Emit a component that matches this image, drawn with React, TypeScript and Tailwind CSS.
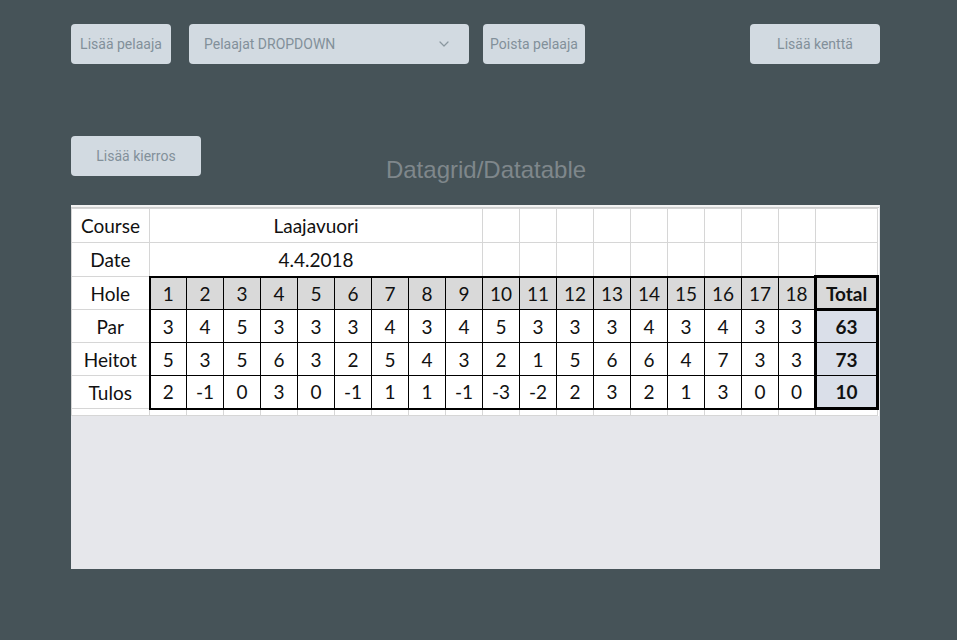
import React from "react";

const par = [3, 4, 5, 3, 3, 3, 4, 3, 4, 5, 3, 3, 3, 4, 3, 4, 3, 3];
const heitot = [5, 3, 5, 6, 3, 2, 5, 4, 3, 2, 1, 5, 6, 6, 4, 7, 3, 3];
const tulos = heitot.map((h, i) => h - par[i]);
const holes = Array.from({ length: 18 }, (_, i) => i + 1);
const sum = (a: number[]) => a.reduce((x, y) => x + y, 0);

const base = "h-[40px] rounded-[4px] bg-[#d2dae1] text-[14px] text-[#82909a] flex items-center";
const btn = `${base} justify-center`;

function Scorecard() {
  const light = "border border-[#d6d6d6] p-0";
  const rows: { label: string; data: number[]; last?: boolean }[] = [
    { label: "Par", data: par },
    { label: "Heitot", data: heitot },
    { label: "Tulos", data: tulos, last: true },
  ];
  return (
    <div className="w-[808px] bg-white">
      <div className="h-[3px] border-b border-[#cfcfcf] bg-[#f3f3f3]" />
      <table
        className="table-fixed border-collapse w-[806px] text-[19px] text-[#111] leading-none"
        style={{ fontFamily: "Lato, 'Open Sans', sans-serif" }}
      >
        <colgroup>
          <col className="w-[78px]" />
          {holes.map((h) => (
            <col key={h} className="w-[37px]" />
          ))}
          <col className="w-[62px]" />
        </colgroup>
        <tbody>
          <tr className="h-[34px]">
            <td className={`${light} text-center`}>Course</td>
            <td colSpan={9} className={`${light} text-center`}>
              Laajavuori
            </td>
            {holes.slice(9).map((h) => (
              <td key={h} className={light} />
            ))}
            <td className={light} />
          </tr>
          <tr className="h-[34px]">
            <td className={`${light} text-center`}>Date</td>
            <td colSpan={9} className={`${light} text-center`}>
              4.4.2018
            </td>
            {holes.slice(9).map((h) => (
              <td key={h} className={light} />
            ))}
            <td className={light} />
          </tr>
          <tr className="h-[33px]">
            <td className={`${light} text-center`}>Hole</td>
            {holes.map((h) => (
              <td
                key={h}
                className={`border border-black border-t-2 p-0 bg-[#d9d9d9] text-center ${
                  h === 1 ? "border-l-2" : ""
                }`}
              >
                {h}
              </td>
            ))}
            <td className="border-[3px] border-black p-0 bg-[#d9d9d9] text-center font-bold">
              Total
            </td>
          </tr>
          {rows.map((r) => (
            <tr key={r.label} className="h-[33px]">
              <td className={`${light} text-center`}>{r.label}</td>
              {r.data.map((v, i) => (
                <td
                  key={i}
                  className={`border border-black p-0 bg-white text-center ${
                    i === 0 ? "border-l-2" : ""
                  } ${r.last ? "border-b-2" : ""}`}
                >
                  {v}
                </td>
              ))}
              <td
                className={`border border-black border-x-[3px] p-0 bg-[#dadfe9] text-center font-bold ${
                  r.last ? "border-b-[3px]" : ""
                }`}
              >
                {sum(r.data)}
              </td>
            </tr>
          ))}
          <tr className="h-[7px]">
            <td className={light} />
            {holes.map((h) => (
              <td key={h} className={light} />
            ))}
            <td className={light} />
          </tr>
        </tbody>
      </table>
    </div>
  );
}

export default function App() {
  return (
    <div
      className="min-h-[640px] w-full bg-[#465358]"
      style={{ fontFamily: "Roboto, 'Liberation Sans', sans-serif" }}
    >
      <div className="pl-[71px] pt-[24px]">
        <div className="flex items-center w-[809px]">
          <button className={`${btn} w-[100px]`}>Lisää pelaaja</button>
          <div className={`${base} w-[280px] ml-[18px] justify-between pl-[15px] pr-[20px]`}>
            <span>Pelaajat DROPDOWN</span>
            <svg width="10" height="6" viewBox="0 0 10 6" fill="none">
              <path
                d="M1 1 L5 5 L9 1"
                stroke="#8a979f"
                strokeWidth="1.2"
                strokeLinecap="round"
                strokeLinejoin="round"
              />
            </svg>
          </div>
          <button className={`${btn} w-[102px] ml-[14px]`}>Poista pelaaja</button>
          <button className={`${btn} w-[130px] ml-auto`}>Lisää kenttä</button>
        </div>

        <div className="mt-[72px] h-[69px] flex items-start">
          <button className={`${btn} w-[130px]`}>Lisää kierros</button>
          <div
            className="w-[570px] pt-[20px] text-center text-[24px] leading-[28px] text-[#7f878b]"
            style={{ fontFamily: "'Liberation Sans', Arial, sans-serif" }}
          >
            Datagrid/Datatable
          </div>
        </div>

        <div className="w-[809px] h-[364px] bg-[#e6e7eb]">
          <Scorecard />
        </div>
      </div>
    </div>
  );
}
